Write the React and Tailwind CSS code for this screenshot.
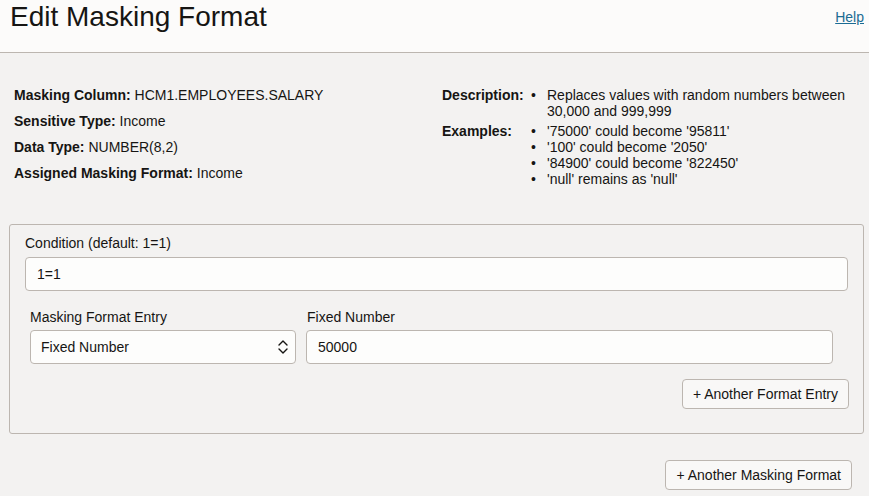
import React from 'react';

const font = { fontFamily: '"Liberation Sans", Arial, sans-serif' };

function InfoRow({ label, value }) {
  return (
    <div className="leading-4">
      <span className="font-bold">{label}</span> {value}
    </div>
  );
}

function BulletList({ items }) {
  return (
    <div className="flex flex-col">
      {items.map((item) => (
        <div key={item} className="flex leading-4">
          <span className="w-[16px] shrink-0">•</span>
          <span>{item}</span>
        </div>
      ))}
    </div>
  );
}

function ChevronUpDown() {
  return (
    <svg width="12" height="16" viewBox="0 0 12 16" fill="none" stroke="#161513" strokeWidth="1.4" strokeLinecap="round" strokeLinejoin="round">
      <path d="M2 6 L6 2 L10 6" />
      <path d="M2 10 L6 14 L10 10" />
    </svg>
  );
}

export default function App() {
  return (
    <div className="min-h-[496px] bg-[#f3f2f1] text-[14px] text-[#161513]" style={font}>
      <header className="h-[53px] bg-[#fcfbfa] border-b border-[#bcb6b0] flex justify-between items-start pl-[10px] pr-[5px]">
        <h1 className="text-[28px] leading-[32px] pt-[1px]">Edit Masking Format</h1>
        <a href="#" className="text-[14px] leading-4 mt-[9px] underline text-[#1b6b93]">Help</a>
      </header>

      <section className="flex pt-[34px] pl-[14px] pr-[10px]">
        <div className="w-[428px] flex flex-col gap-[10px]">
          <InfoRow label="Masking Column:" value="HCM1.EMPLOYEES.SALARY" />
          <InfoRow label="Sensitive Type:" value="Income" />
          <InfoRow label="Data Type:" value="NUMBER(8,2)" />
          <InfoRow label="Assigned Masking Format:" value="Income" />
        </div>
        <div className="flex-1 flex flex-col gap-[4px]">
          <div className="flex">
            <span className="w-[89px] shrink-0 font-bold leading-4">Description:</span>
            <BulletList items={['Replaces values with random numbers between 30,000 and 999,999']} />
          </div>
          <div className="flex">
            <span className="w-[89px] shrink-0 font-bold leading-4">Examples:</span>
            <BulletList
              items={[
                "'75000' could become '95811'",
                "'100' could become '2050'",
                "'84900' could become '822450'",
                "'null' remains as 'null'",
              ]}
            />
          </div>
        </div>
      </section>

      <div className="ml-[9px] mr-[5px] mt-[37px] border border-[#bcb6b0] rounded-[3px] pt-[10px] pb-[24px] px-[15px]">
        <label className="block leading-4">Condition (default: 1=1)</label>
        <div className="mt-[6px] h-[34px] bg-[#fdfdfc] border border-[#bcb6b0] rounded-[4px] flex items-center px-[11px]">
          1=1
        </div>

        <div className="flex gap-[10px] pl-[5px] pr-[15px] mt-[18px]">
          <div className="w-[266px] shrink-0">
            <label className="block leading-4">Masking Format Entry</label>
            <div className="mt-[5px] h-[34px] bg-[#fdfdfc] border border-[#bcb6b0] rounded-[4px] flex items-center justify-between pl-[10px] pr-[6px]">
              <span>Fixed Number</span>
              <ChevronUpDown />
            </div>
          </div>
          <div className="flex-1">
            <label className="block leading-4 pl-[1px]">Fixed Number</label>
            <div className="mt-[5px] h-[34px] bg-[#fdfdfc] border border-[#bcb6b0] rounded-[4px] flex items-center px-[11px]">
              50000
            </div>
          </div>
        </div>

        <div className="flex justify-end mt-[15px]">
          <button className="h-[30px] px-[10px] bg-[#f9f8f7] border border-[#bcb6b0] rounded-[4px] leading-4 -mr-[1px]">
            + Another Format Entry
          </button>
        </div>
      </div>

      <div className="flex justify-end mt-[26px] pr-[17px]">
        <button className="h-[30px] px-[10px] bg-[#f9f8f7] border border-[#bcb6b0] rounded-[4px] leading-4">
          + Another Masking Format
        </button>
      </div>
    </div>
  );
}
